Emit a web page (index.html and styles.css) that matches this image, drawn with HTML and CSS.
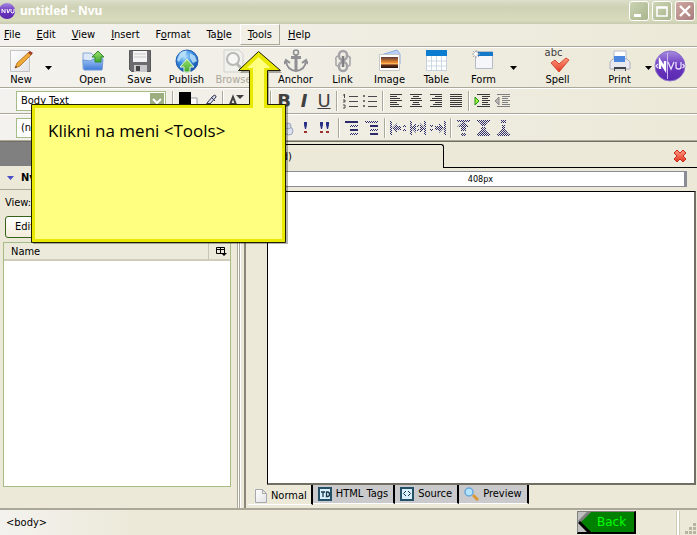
FILE: index.html
```html
<!DOCTYPE html>
<html lang="en">

<head>
  <meta charset="UTF-8">
  <meta name="viewport" content="width=device-width, initial-scale=1.0">
  <title>untitled - Nvu</title>
  <link rel="stylesheet" href="styles.css">
</head>

<body>
  <!-- shared fills and icons -->
  <svg class="defs" width="0" height="0" aria-hidden="true">
    <defs>
      <pattern id="dither" width="2" height="2" patternUnits="userSpaceOnUse">
        <path d="M0 0h1v1H0zM1 1h1v1H1z" fill="#2c2c6c" />
      </pattern>
      <linearGradient id="purple" x1="0" y1="0" x2="0" y2="1">
        <stop offset="0" stop-color="#a58be0" />
        <stop offset="0.5" stop-color="#6a35bd" />
        <stop offset="1" stop-color="#5a28b0" />
      </linearGradient>
      <linearGradient id="blue" x1="0" y1="0" x2="0" y2="1">
        <stop offset="0" stop-color="#9cc4f4" />
        <stop offset="1" stop-color="#3f78d8" />
      </linearGradient>
      <linearGradient id="green" x1="0" y1="0" x2="0" y2="1">
        <stop offset="0" stop-color="#9be070" />
        <stop offset="1" stop-color="#3fa82c" />
      </linearGradient>
      <linearGradient id="paper" x1="0" y1="0" x2="1" y2="1">
        <stop offset="0" stop-color="#ffffff" />
        <stop offset="1" stop-color="#e2e2e6" />
      </linearGradient>
      <linearGradient id="sunset" x1="0" y1="0" x2="0" y2="1">
        <stop offset="0" stop-color="#5a3a34" />
        <stop offset="0.5" stop-color="#f08a30" />
        <stop offset="0.65" stop-color="#ffd070" />
        <stop offset="0.7" stop-color="#703018" />
        <stop offset="1" stop-color="#201010" />
      </linearGradient>
      <radialGradient id="globe" cx="0.4" cy="0.3" r="0.7">
        <stop offset="0" stop-color="#b8e4ff" />
        <stop offset="0.5" stop-color="#3c90e4" />
        <stop offset="1" stop-color="#1450a8" />
      </radialGradient>
      <linearGradient id="red" x1="0" y1="0" x2="0" y2="1">
        <stop offset="0" stop-color="#ff9a80" />
        <stop offset="1" stop-color="#e03820" />
      </linearGradient>
      <symbol id="down" viewBox="0 0 7 4">
        <path d="M0 0h7L3.5 4z" />
      </symbol>
    </defs>
  </svg>

  <header class="titlebar">
    <svg width="16" height="18" viewBox="0 0 16 18"><circle cx="7" cy="9" r="8" fill="url(#purple)" /><path d="M2 11V7l3 4V7M7 7l1 4 2-4M11 7v3l1 1h1l1-1V7" fill="none" stroke="#fff" /></svg>
    <h1>untitled - Nvu</h1>
    <div class="window-btns">
      <button type="button" aria-label="Minimize"><svg width="18" height="18"><path d="M4 12h7v3H4z" fill="#fff" /></svg></button>
      <button type="button" aria-label="Maximize"><svg width="18" height="18"><path d="M4 5h10v9H4zM4 6h10" fill="none" stroke="#fff" stroke-width="1.6" /></svg></button>
      <button type="button" class="close" aria-label="Close"><svg width="18" height="18"><path d="M4 4l10 10M14 4L4 14" stroke="#fff" stroke-width="2.4" /></svg></button>
    </div>
  </header>

  <nav class="menubar">
    <button type="button"><u>F</u>ile</button>
    <button type="button"><u>E</u>dit</button>
    <button type="button"><u>V</u>iew</button>
    <button type="button"><u>I</u>nsert</button>
    <button type="button">F<u>o</u>rmat</button>
    <button type="button">Ta<u>b</u>le</button>
    <button type="button" class="active"><u>T</u>ools</button>
    <button type="button"><u>H</u>elp</button>
  </nav>

  <div class="toolbar">
    <button type="button" class="tool first">
      <svg width="24" height="24"><path d="M1.500 1.500h19v21h-19z" fill="url(#paper)" stroke="#c4c4c4" /><path d="M6 19l2-5L20 3l3 2L11 17z" fill="#f0a838" stroke="#a86c20" stroke-width="0.800" /><path d="M19 4l2-2 3 2-2 2z" fill="#a03c28" /><path d="M6 19l1-2 1 1z" fill="#222" /></svg>
      New</button>
    <button type="button" class="drop" aria-label="New options"><svg width="7" height="4"><use href="#down" /></svg></button>
    <button type="button" class="tool">
      <svg width="24" height="24"><path d="M2 4h8l2 2h9v14H2z" fill="#dce8f8" stroke="#88a8d8" /><path d="M2 11l7 1 4-2h9l-1 11H3z" fill="url(#blue)" stroke="#6c98dc" /><path d="M14 13V8h-3l6-6 6 6h-3v5z" fill="url(#green)" stroke="#338c28" /></svg>
      Open</button>
    <button type="button" class="tool">
      <svg width="24" height="24"><path d="M1.500 1.500h21v21h-19l-2-2z" fill="#6c6c70" stroke="#57575a" /><path d="M5 2h14v11H5z" fill="#f4f4f4" /><path d="M6 5h12M6 8h12" stroke="#c8c8c8" /><path d="M6 16h13v7H6z" fill="#c8c8cc" /><path d="M8 17h4v5H8z" fill="#444" /></svg>
      Save</button>
    <button type="button" class="tool">
      <svg width="24" height="24"><circle cx="12" cy="12" r="11" fill="url(#globe)" stroke="#2860b0" /><path d="M5 4q4-3 7-2l-2 4-4 3-2 4-2-2zM15 4l5 3 2 5-4 2-3-5z" fill="#c4e6fa" opacity="0.800" /><path d="M9 23v-5H5l7-8 7 8h-4v5z" fill="url(#green)" stroke="#e0f4d8" /></svg>
      Publish</button>
    <button type="button" class="tool" disabled>
      <svg width="24" height="24"><path d="M2 1h15l4 4v18H2z" fill="#f0f0ec" stroke="#d0d0cc" /><circle cx="11" cy="10" r="6" fill="#f6f6f4" stroke="#b8b8b4" stroke-width="2" /><path d="M15 15l6 6" stroke="#b8b8b4" stroke-width="3" /></svg>
      Browse</button>
    <button type="button" class="tool spaced">
      <svg width="24" height="24" fill="none" stroke="#909094"><circle cx="12" cy="3.500" r="2.500" stroke-width="1.500" /><path d="M12 6v16M7 8.500h10" stroke-width="3" /><path d="M2 12q1 9 10 10 9-1 10-10M0 15l2-4 4 3M24 15l-2-4-4 3" stroke-width="2" /></svg>
      Anchor</button>
    <button type="button" class="tool">
      <svg width="24" height="24" fill="none" stroke="#a4a4a8" stroke-width="2.500"><rect x="8" y="2" width="8" height="9" rx="4" /><rect x="8" y="13" width="8" height="9" rx="4" /><path d="M12 7v11" stroke="#808084" /><path d="M7 7q-3 1-2 4v5l3 2M17 7q3 1 2 4v5l-3 2" stroke-width="1.500" /></svg>
      Link</button>
    <button type="button" class="tool">
      <svg width="24" height="24"><path d="M3 6l16-5 3 4v10z" fill="#b8d0f8" stroke="#8caae0" /><path d="M1.500 5.500h20v16h-20z" fill="#fff" stroke="#c8c8c8" /><path d="M3 8h17v11H3z" fill="url(#sunset)" /></svg>
      Image</button>
    <button type="button" class="tool">
      <svg width="24" height="24"><path d="M1.500 1.500h20v20h-20z" fill="#fff" stroke="#c4d0dc" /><path d="M1 1h21v6H1z" fill="#0c7cd0" /><path d="M2 12h19M2 17h19M6.500 7v14M11.500 7v14M16.500 7v14" stroke="#ccd8e4" /></svg>
      Table</button>
    <button type="button" class="tool">
      <svg width="24" height="24"><path d="M3.500 2.500h17v17h-17z" fill="#f4f6fa" stroke="#b4bcc8" /><path d="M4 3h17v4H4z" fill="#1478c8" /><path d="M4 1v8M0 5h8M1 2l6 6M7 2L1 8" stroke="#a8a8a8" /><circle cx="4" cy="5" r="2" fill="#fff" /></svg>
      Form</button>
    <button type="button" class="drop" aria-label="Form options"><svg width="7" height="4"><use href="#down" /></svg></button>
    <button type="button" class="tool spell">
      <span class="abc">abc</span>
      <svg width="24" height="16"><path d="M5 6l4-3 4 4 7-6 3 2-10 12z" fill="url(#red)" stroke="#d84830" /></svg>
      Spell</button>
    <button type="button" class="tool spaced">
      <svg width="24" height="24"><path d="M6 2h12v11H6z" fill="#fff" stroke="#b8bccc" /><path d="M2 13l3-3h14l3 3v7H2z" fill="#e8e8f0" stroke="#b0b0bc" /><path d="M6 7h11v6H6z" fill="#4c88e0" /><path d="M6 18h12v4H6z" fill="#404448" /><path d="M7 20h10v2H7z" fill="#ddd" /></svg>
      Print</button>
    <button type="button" class="drop narrow" aria-label="Print options"><svg width="7" height="4"><use href="#down" /></svg></button>
    <a href="#" class="brand" aria-label="Nvu">
      <svg width="32" height="32"><circle cx="16" cy="16" r="15" fill="url(#purple)" stroke="#8c70c8" /><path d="M6 19v-8l5 8v-8" fill="none" stroke="#fff" stroke-width="2.400" /><path d="M13.500 3v26" stroke="#cbb8f0" /><path d="M14 12l3 7 3-7M22 12v5q0 2 2.500 2t2.500-2v-5M4 14l-2 2 2 2M28.500 14l2 2-2 2" fill="none" stroke="#e8e0fa" stroke-width="1.300" /></svg>
    </a>
  </div>

  <div class="formatbar">
    <label class="combo">
      <select aria-label="Paragraph format">
        <option>Body Text</option>
      </select>
      <svg width="14" height="16"><path d="M0 0h14v16H0z" fill="#9cad80" /><path d="M3 6l4 4 4-4" fill="none" stroke="#fff" stroke-width="2" /></svg>
    </label>
    <span class="sep"></span>
    <button type="button" class="color" aria-label="Text color"><svg width="20" height="18"><path d="M7 6h12v11H7z" fill="#fff" stroke="#999" /><path d="M1 0h12v13H1z" /></svg></button>
    <button type="button" aria-label="Highlight color"><svg width="16" height="16" fill="none" stroke="#333450"><path d="M5 10l6-7q3-2 3 1l-6 7zM9 4l4 4M5 10l3 1-5 4z" fill="#d8dcea" /></svg></button>
    <span class="sep"></span>
    <button type="button" class="wide" aria-label="Smaller font"><svg width="18" height="16"><path d="M3 14l4-10 4 10M5 11h5" fill="none" stroke="#404040" stroke-width="2" /><path d="M10 2h8l-4 4z" fill="#404040" /></svg></button>
    <span class="sep"></span>
    <button type="button" class="letter bold">B</button>
    <button type="button" class="letter italic">I</button>
    <button type="button" class="letter under">U</button>
    <span class="sep"></span>
    <button type="button" aria-label="Numbered list"><svg width="16" height="16"><path d="M7 3.500h9M7 8.500h9M7 13.500h9M2.500 1v4M1 2h1M1 7h2v2H1M1 12h2v3H1" fill="none" stroke="#484848" /></svg></button>
    <button type="button" aria-label="Bulleted list"><svg width="16" height="16" fill="none" stroke="#484848"><path d="M6 3.500h9M6 8.500h9M6 13.500h9" /><path d="M1.500 2.500h1v1h-1zM1.500 7.500h1v1h-1zM1.500 12.500h1v1h-1z" /></svg></button>
    <span class="sep"></span>
    <button type="button" aria-label="Align left"><svg width="14" height="14"><path d="M1 .5h12M1 2.500h7M1 4.500h10M1 6.500h12M1 8.500h7M1 10.500h9M1 12.500h12" stroke="#383838" /></svg></button>
    <button type="button" aria-label="Align center"><svg width="14" height="14"><path d="M1 .5h12M4 2.500h6M2 4.500h10M1 6.500h12M4 8.500h6M3 10.500h8M1 12.500h12" stroke="#383838" /></svg></button>
    <button type="button" aria-label="Align right"><svg width="14" height="14"><path d="M1 .5h12M6 2.500h7M3 4.500h10M1 6.500h12M6 8.500h7M4 10.500h9M1 12.500h12" stroke="#383838" /></svg></button>
    <button type="button" aria-label="Justify"><svg width="14" height="14"><path d="M1 .5h12M1 2.500h12M1 4.500h12M1 6.500h12M1 8.500h12M1 10.500h12M1 12.500h12" stroke="#383838" /></svg></button>
    <span class="sep"></span>
    <button type="button" aria-label="Indent"><svg width="16" height="14"><path d="M3 .5h13M8 2.500h8M8 4.500h6M8 6.500h8M8 8.500h6M8 10.500h8M3 12.500h13" stroke="#383838" /><path d="M1 3l4 4-4 4z" fill="#9cf040" stroke="#209010" /></svg></button>
    <button type="button" aria-label="Outdent"><svg width="16" height="14"><path d="M3 .5h13M8 2.500h8M8 4.500h6M8 6.500h8M8 8.500h6M8 10.500h8M3 12.500h13" stroke="#808080" /><path d="M5 3L1 7l4 4z" fill="#b4b4b0" stroke="#888" /></svg></button>
  </div>

  <div class="formatbar second">
    <label class="combo">
      <select aria-label="Class">
        <option>(no class)</option>
      </select>
      <svg width="14" height="16"><path d="M0 0h14v16H0z" fill="#9cad80" /><path d="M3 6l4 4 4-4" fill="none" stroke="#fff" stroke-width="2" /></svg>
    </label>
    <div class="pushed">
      <button type="button" aria-label="Link target"><svg width="16" height="16"><circle cx="11" cy="11" r="4" fill="#dde2ee" stroke="#9aa6bc" /><circle cx="10" cy="6" r="3" fill="#d0d8e8" stroke="#9aa6bc" /></svg></button>
      <button type="button" aria-label="Emphasis"><svg width="16" height="16"><path d="M6 2h3v3L8 9H7L6 5z" fill="#283088" /><path d="M6 11h3v2H6z" fill="#a03030" /></svg></button>
      <button type="button" aria-label="Strong emphasis"><svg width="16" height="16"><path d="M2 2h3v3L4 9H3L2 5zM8 2h3v3l-1 4H9L8 5z" fill="#283088" /><path d="M2 11h3v2H2zM8 11h3v2H8z" fill="#a03030" /></svg></button>
    </div>
    <span class="sep"></span>
    <button type="button" aria-label="Definition term"><svg width="14" height="14"><path d="M0 0h13v2H0zM5 8h8v2H5z" fill="#2c2c6c" /><path d="M5 4h8v2H5zM5 12h8v2H5z" fill="url(#dither)" /></svg></button>
    <button type="button" aria-label="Definition description"><svg width="14" height="14"><path d="M0 0h13v2H0zM5 8h8v2H5z" fill="url(#dither)" /><path d="M5 4h8v2H5zM5 12h8v2H5z" fill="#2c2c6c" /></svg></button>
    <span class="sep"></span>
    <button type="button" aria-label="Align to left edge"><svg width="16" height="14" fill="url(#dither)"><path d="M0 0h2v14H0zM2 7l5-5v3h4v4H7v3zM13 4h3v2h-3zM13 8h3v2h-3z" /></svg></button>
    <button type="button" aria-label="Center horizontally"><svg width="16" height="14" fill="url(#dither)"><path d="M0 0h2v14H0zM1 7l5-5v10zM7 4h2v2H7zM7 8h2v2H7zM15 7l-5-5v10zM14 0h2v14h-2z" /></svg></button>
    <button type="button" aria-label="Align to right edge"><svg width="16" height="14" fill="url(#dither)"><path d="M14 0h2v14h-2zM14 7L9 2v3H5v4h4v3zM0 4h3v2H0zM0 8h3v2H0z" /></svg></button>
    <span class="sep"></span>
    <button type="button" aria-label="Align to top"><svg width="14" height="16" fill="url(#dither)"><path d="M0 0h13v2H0zM6.500 1l6 6H9v4H4V7H0zM4 13h5v3H4z" /></svg></button>
    <button type="button" aria-label="Center vertically"><svg width="14" height="16" fill="url(#dither)"><path d="M0 0h13v2H0zM2 2h9L8 6H5zM4 7h2v2H4zM7 7h2v2H7zM6.500 8l6 6H0zM0 14h13v2H0z" /></svg></button>
    <button type="button" aria-label="Align to bottom"><svg width="14" height="16" fill="url(#dither)"><path d="M4 0h5v3H4zM5 5h3v4l4 5H1l4-5zM0 14h13v2H0z" /></svg></button>
  </div>

  <main class="workspace">
    <section class="sidebar">
      <div class="strip"></div>
      <h2><svg width="7" height="4" fill="#4c4cc8"><use href="#down" /></svg>Nvu Site Manager</h2>
      <div class="view-row">View:</div>
      <div class="edit-row"><button type="button">Edit Sites</button></div>
      <table class="site-tree">
        <thead>
          <tr>
            <th>Name</th>
            <th class="picker"><button type="button" aria-label="Columns"><svg width="11" height="10"><path d="M.5.500h8v6h-8zM0 2.500h9M4.500 0v6" fill="none" stroke="#000" /><path d="M5 6h6L8 9z" /></svg></button></th>
          </tr>
        </thead>
        <tbody>
          <tr>
            <td colspan="2"></td>
          </tr>
        </tbody>
      </table>
    </section>
    <div class="splitter"></div>
    <section class="editor">
      <div class="doc-tabs">
        <button type="button" class="doc-tab">(untitled)</button>
        <div class="tab-rest">
          <button type="button" aria-label="Close tab"><svg width="14" height="14"><path d="M4 1l3 3 3-3 3 3-3 3 3 3-3 3-3-3-3 3-3-3 3-3-3-3z" fill="url(#red)" stroke="#c82820" /></svg></button>
        </div>
      </div>
      <div class="ruler">408px</div>
      <div class="canvas" contenteditable="true"></div>
      <div class="modes">
        <button type="button" class="current"><svg width="12" height="14"><path d="M.5.500h7l4 4v9H.5zM7.500.500v4h4" fill="url(#paper)" stroke="#a8a8b0" /></svg>Normal</button>
        <button type="button"><svg width="14" height="14"><path d="M1 1h12v12H1z" fill="#d8f0fc" stroke="#245068" stroke-width="2" /><path d="M3 5h4M5 5v5M8.500 5v4.500h1q2 0 2-2.200t-2-2.300z" fill="none" stroke="#18384c" stroke-width="1.300" /></svg>HTML Tags</button>
        <button type="button"><svg width="14" height="14"><path d="M1 1h12v12H1z" fill="#d8f0fc" stroke="#245068" stroke-width="2" /><path d="M6 4L3.500 6.500 6 9M8 4l2.500 2.500L8 9" fill="none" stroke="#18384c" /></svg>Source</button>
        <button type="button"><svg width="15" height="14"><path d="M9 8l5 5" stroke="#d89838" stroke-width="3" /><circle cx="5" cy="5" r="4" fill="#b4e4fc" stroke="#68a8dc" stroke-width="1.500" /></svg>Preview</button>
      </div>
    </section>
  </main>

  <footer class="statusbar">
    <a href="#">&lt;body&gt;</a>
    <button type="button" class="back"><svg width="14" height="22"><path d="M0 0h12L1 11l11 11H0z" fill="#c0c0c0" /><path d="M12 0L1 11" stroke="#808080" stroke-width="3" /><path d="M1 11l11 11" stroke="#000" stroke-width="3" /></svg>Back</button>
    <span class="grip-sep"></span>
    <svg class="grip" width="12" height="12"><path d="M8 0h3v3H8zM4 4h3v3H4zM8 4h3v3H8zM0 8h3v3H0zM4 8h3v3H4zM8 8h3v3H8z" fill="#b8b4a2" /></svg>
  </footer>

  <!-- help balloon pointing at the Tools menu -->
  <aside class="callout">
    <svg width="262" height="200" viewBox="0 0 262 200">
      <path d="M2 56h218V22h-11L229 2l22 20h-13v34h19v137H2z" fill="#000" opacity="0.300" />
      <path d="M.5 53.500h218V19.500h-11L227.500.500l22 19h-13v34h18v138H.5z" fill="#e8e800" stroke="#202000" />
      <path d="M4 57h218V17h-6L227.500 6l12 11H233v40h18v131H4z" fill="#ffff80" />
    </svg>
    <p>Klikni na meni &lt;Tools&gt;</p>
  </aside>
</body>

</html>
```

FILE: styles.css
```css
* {
  box-sizing: border-box;
}

body {
  margin: 0;
  min-height: 100vh;
  display: flex;
  flex-direction: column;
  position: relative;
  overflow: hidden;
  background-color: #ece9d8;
  color: #000;
  font-family: "DejaVu Sans Condensed", "DejaVu Sans", sans-serif;
  font-size: 11px;
  line-height: 14px;
}

button {
  margin: 0;
  padding: 0;
  border: none;
  background: none;
  color: inherit;
  font: inherit;
}

svg {
  display: block;
  flex: none;
}

.defs {
  position: absolute;
}

/* title bar */
.titlebar {
  display: flex;
  align-items: center;
  height: 24px;
  padding: 0 2px 2px 0;
  gap: 4px;
  background: linear-gradient(#dcdfcb, #cfd2b4 30%, #d9dbbd 85%, #c8cbb0);
}

.titlebar h1 {
  flex: 1;
  margin: 0;
  color: #fff;
  font-family: "Noto Sans", sans-serif;
  font-size: 12px;
  font-weight: bold;
}

.window-btns {
  display: flex;
  gap: 3px;
}

.window-btns button {
  width: 20px;
  height: 20px;
  border: 1px solid #fff;
  border-radius: 3px;
  background: linear-gradient(135deg, #ccd4b4, #a8b58c);
}

.window-btns .close {
  background: linear-gradient(135deg, #cfa8a0, #a87c7c);
}

/* menu bar */
.menubar,
.toolbar,
.formatbar {
  display: flex;
  background: linear-gradient(90deg, #f3f2ee, #ece9d8);
}

.menubar {
  height: 23px;
  padding-bottom: 1px;
  margin-left: -4px;
  border-bottom: 1px solid #aca899;
}

.menubar button {
  padding: 0 7px;
  border: 1px solid transparent;
}

.menubar .active {
  background-color: #f1efe6;
  border-color: #fff #aca899 #aca899 #fff;
}

/* main toolbar */
.toolbar {
  height: 41px;
  border-top: 1px solid #fff;
  border-bottom: 1px solid #aca899;
}

.tool {
  width: 47px;
  display: flex;
  flex-direction: column;
  align-items: center;
  padding-top: 1px;
}

.tool:disabled {
  color: #aca899;
}

.tool.first {
  width: 42px;
}

.tool.spaced {
  margin-left: 15px;
}

.drop {
  width: 13px;
  margin-right: 14px;
  display: flex;
  align-items: center;
  justify-content: center;
}

.drop.narrow {
  width: 11px;
  margin-right: 0;
}

.brand {
  padding-top: 2px;
}

.abc {
  height: 8px;
  margin-right: 8px;
  color: #404040;
  font-size: 11px;
  line-height: 8px;
}

/* formatting bars */
.formatbar {
  height: 26px;
  align-items: center;
  padding-left: 16px;
  border-top: 1px solid #fff;
  border-bottom: 1px solid #aca899;
}

.formatbar.second {
  height: 27px;
}

.formatbar button {
  width: 20px;
  height: 20px;
  display: flex;
  align-items: center;
  justify-content: center;
}

.formatbar .wide {
  width: 42px;
  justify-content: flex-start;
}

.formatbar .color {
  width: 24px;
}

.sep {
  width: 2px;
  height: 20px;
  margin: 0 2px;
  border-left: 1px solid #aca899;
  border-right: 1px solid #fff;
}

.combo {
  width: 150px;
  margin-right: 4px;
  display: grid;
  align-items: center;
}

.combo select,
.combo svg {
  grid-area: 1 / 1;
}

.combo svg {
  justify-self: end;
  margin-right: 2px;
  pointer-events: none;
}

.combo select {
  appearance: none;
  height: 20px;
  padding: 0 4px;
  border: 1px solid #a5bc86;
  border-radius: 0;
  background-color: #fff;
  font: inherit;
}

.formatbar .letter {
  color: #404040;
  font-family: "DejaVu Sans", sans-serif;
  font-size: 18px;
  line-height: 18px;
}

.bold,
.italic {
  font-weight: bold;
}

.italic {
  font-style: italic;
}

.under {
  text-decoration: underline;
}

.pushed {
  display: flex;
  margin-left: 106px;
}

/* workspace */
.workspace {
  flex: 1;
  display: flex;
  border-top: 1px solid #716f64;
}

.sidebar {
  width: 34%;
  display: flex;
  flex-direction: column;
  padding-bottom: 21px;
}

.strip {
  height: 24px;
  background-color: #808080;
}

.sidebar h2 {
  display: flex;
  align-items: center;
  gap: 7px;
  height: 24px;
  margin: 0;
  padding-left: 7px;
  border-bottom: 1px solid #aca899;
  font-size: 11px;
}

.view-row {
  padding: 6px 5px;
}

.edit-row {
  padding-left: 5px;
}

.edit-row button {
  height: 22px;
  padding: 0 9px;
  border: 1px solid #37621b;
  border-radius: 3px;
  background: linear-gradient(#fff, #f3ecdc);
}

.site-tree {
  flex: 1;
  display: flex;
  flex-direction: column;
  margin: 4px 6px 0 3px;
  border: 1px solid #a5bc86;
  background-color: #fff;
}

.site-tree tr {
  display: flex;
}

.site-tree th {
  flex: 1;
  height: 18px;
  padding: 2px 7px;
  background-color: #ebeadb;
  border-bottom: 2px solid #d0ccba;
  font-weight: normal;
  text-align: left;
}

.site-tree .picker {
  flex: none;
  width: 22px;
  padding-top: 4px;
  border-left: 1px solid #c7c5b2;
}

.picker button {
  display: block;
}

.splitter {
  width: 9px;
  border-left: 1px solid #aca899;
  border-right: 2px solid #8a8778;
  background: linear-gradient(90deg, #fff 1px, #aca899 1px 2px, #fff 2px 3px, #ece9d8 3px);
}

.editor {
  flex: 1;
  display: flex;
  flex-direction: column;
}

.doc-tabs {
  display: flex;
  height: 26px;
  padding-top: 2px;
}

.doc-tab {
  width: 44%;
  border: 1px solid #000;
  border-width: 1px 1px 0 0;
  border-radius: 0 3px 0 0;
  text-align: left;
}

.tab-rest {
  flex: 1;
  display: flex;
  align-items: center;
  justify-content: flex-end;
  padding-right: 10px;
  border-bottom: 1px solid #000;
}

.ruler {
  margin: 3px 10px 0 22px;
  padding-left: 8px;
  height: 16px;
  border: 1px solid #898c95;
  border-right-width: 3px;
  background-color: #fff;
  font-size: 9px;
  text-align: center;
}

.canvas {
  flex: 1;
  margin: 4px 1px 0 21px;
  border: 1px solid #000;
  border-right: 2px solid #716f64;
  border-bottom: 2px solid #716f64;
  background-color: #fff;
}

.modes {
  display: flex;
  align-items: flex-start;
  height: 23px;
  padding-left: 2px;
}

.modes button {
  display: flex;
  align-items: center;
  gap: 4px;
  height: 19px;
  padding: 0 5px;
  border-right: 2px solid #000;
  border-bottom: 1px solid #fff;
  background-color: #cacacc;
}

.modes .current {
  height: 20px;
  padding: 3px 4px 0 7px;
  background-color: #ece9d8;
}

/* status bar */
.statusbar {
  display: flex;
  align-items: center;
  height: 27px;
  padding: 0 0 0 6px;
  border-top: 2px solid #aca899;
  background: linear-gradient(90deg, #f3f2ee, #ece9d8 20%);
}

.statusbar a {
  flex: 1;
  color: inherit;
  text-decoration: none;
}

.back {
  width: 59px;
  height: 23px;
  display: flex;
  align-items: center;
  gap: 5px;
  border: 1px solid #808080;
  border-right: 2px solid #000;
  border-bottom: 2px solid #000;
  background-color: #008000;
  color: #00ff00;
  font-family: "DejaVu Sans", sans-serif;
  font-size: 12px;
  overflow: hidden;
}

.grip-sep {
  width: 4px;
  height: 24px;
  margin: 0 5px 0 40px;
  border-left: 1px solid #d0ccba;
  border-right: 1px solid #d0ccba;
  background-color: #fff;
}

.grip {
  align-self: flex-end;
}

/* balloon over the window */
.callout {
  position: absolute;
  left: 31px;
  top: 51px;
  display: grid;
}

.callout svg,
.callout p {
  grid-area: 1 / 1;
}

.callout p {
  margin: 0;
  padding: 68px 0 0 17px;
  font-family: "Open Sans", sans-serif;
  font-size: 17px;
  line-height: 24px;
}
```
